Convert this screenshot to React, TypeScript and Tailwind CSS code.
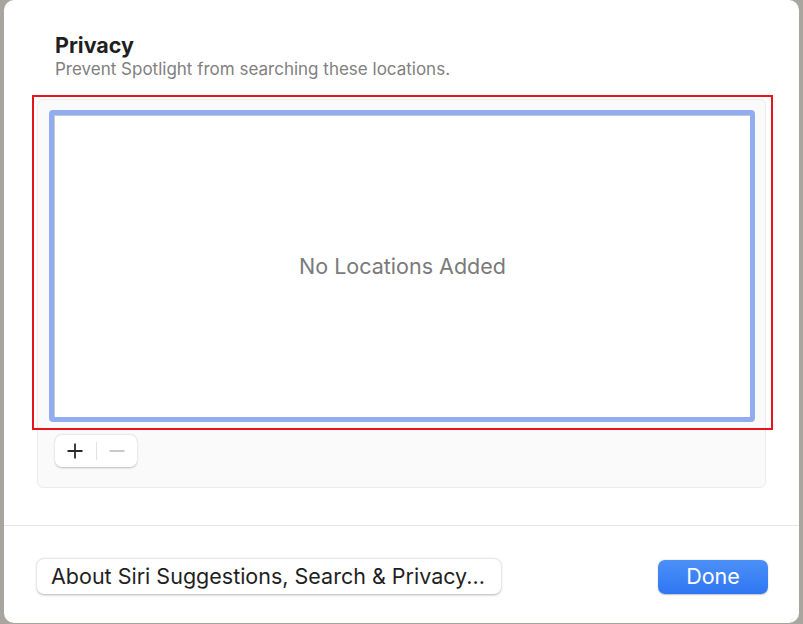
export default function App() {
  return (
    <div className="w-[803px] h-[624px] bg-[#a8a59e] flex px-[4px] pb-[1px] overflow-hidden font-['Inter','Liberation_Sans',sans-serif]">
      <div className="flex-1 flex flex-col bg-white rounded-[10px]">
        <div className="px-[33px] pt-[32px]">
          <div className="ml-[18px]">
            <h1 className="text-[21.5px] leading-[27px] font-bold text-[#1f1f1f]">Privacy</h1>
            <p className="text-[17px] leading-[20px] text-[#808080]">
              Prevent Spotlight from searching these locations.
            </p>
          </div>

          <div className="mt-[20px] h-[389px] bg-[#fafafa] border border-[#ececec] rounded-[6px] pt-[10px] pl-[11px] pr-[10px] flex flex-col">
            <div className="relative">
              <div className="h-[312px] border-[5px] border-[#8fadf0] rounded-[4px] bg-white">
                <div className="h-full border-t border-l border-[#c9c9c9] flex items-center justify-center">
                  <span className="text-[21.5px] text-[#7a7a7a]">No Locations Added</span>
                </div>
              </div>
              <div className="absolute -left-[17px] -top-[15px] -right-[18px] -bottom-[8px] border-2 border-[#e8141c] pointer-events-none" />
            </div>

            <div className="mt-[13px] ml-[6px] w-[82px] h-[32px] bg-white rounded-[7px] shadow-[0_0.5px_2px_rgba(0,0,0,0.25)] flex items-center">
              <div className="flex-1 flex items-center justify-center">
                <svg width="18" height="18" viewBox="0 0 18 18">
                  <path d="M9 1.5v15M1.5 9h15" stroke="#2a2a2a" strokeWidth="1.8" />
                </svg>
              </div>
              <div className="w-px h-[18px] bg-[#e2e2e2]" />
              <div className="flex-1 flex items-center justify-center">
                <svg width="18" height="18" viewBox="0 0 18 18">
                  <path d="M1.5 9h15" stroke="#b8b8b8" strokeWidth="1.5" />
                </svg>
              </div>
            </div>
          </div>
        </div>

        <div className="mt-[37px] h-px bg-[#e6e6e6]" />

        <div className="pl-[33px] pr-[31px] pt-[33px] flex items-center justify-between">
          <button className="h-[35px] w-[464px] bg-white rounded-[7px] shadow-[0_0.5px_2.5px_rgba(0,0,0,0.3)] text-[21.5px] text-[#1f1f1f] text-left pl-[14px]">
            About Siri Suggestions, Search &amp; Privacy...
          </button>
          <button className="h-[34px] w-[110px] rounded-[7px] bg-gradient-to-b from-[#4b90f8] to-[#2f76f2] text-white text-[21.5px] shadow-[0_0.5px_1.5px_rgba(0,0,0,0.25)]">
            Done
          </button>
        </div>
      </div>
    </div>
  );
}
